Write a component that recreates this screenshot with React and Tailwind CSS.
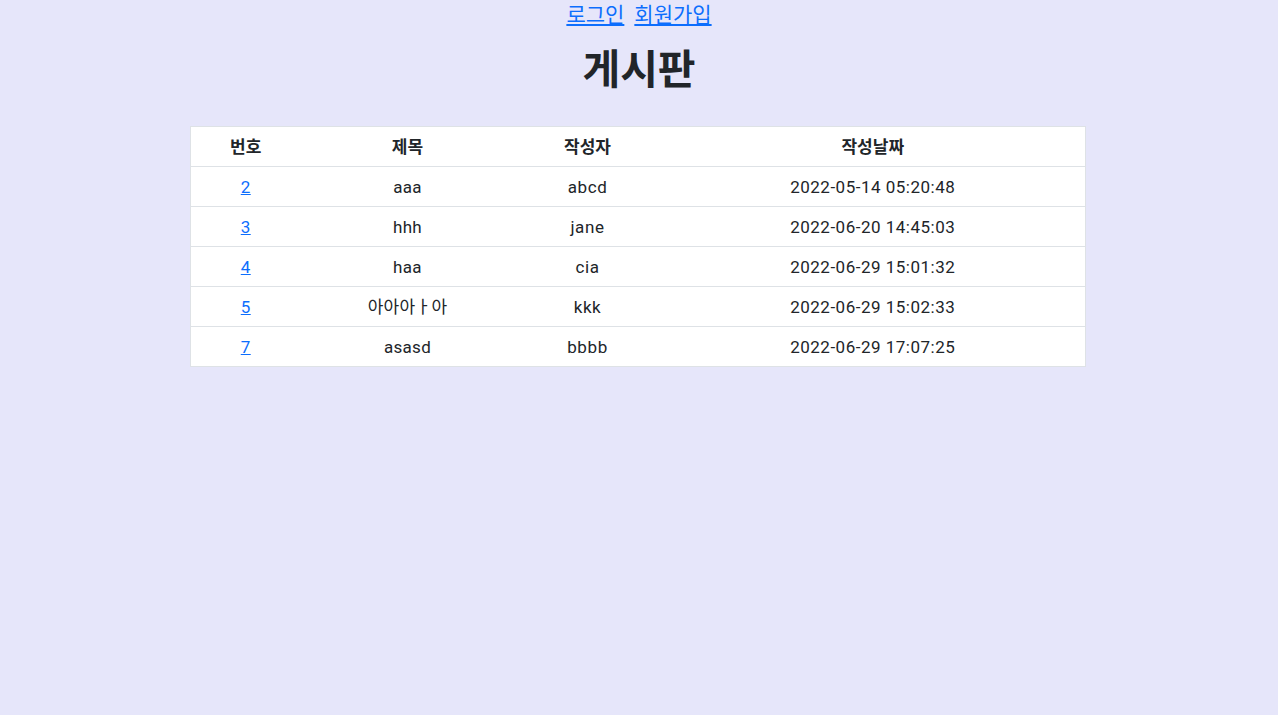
import React from 'react';

const posts = [
    { id: 2, title: 'aaa', writer: 'abcd', date: '2022-05-14 05:20:48' },
    { id: 3, title: 'hhh', writer: 'jane', date: '2022-06-20 14:45:03' },
    { id: 4, title: 'haa', writer: 'cia', date: '2022-06-29 15:01:32' },
    { id: 5, title: '아아아ㅏ아', writer: 'kkk', date: '2022-06-29 15:02:33' },
    { id: 7, title: 'asasd', writer: 'bbbb', date: '2022-06-29 17:07:25' },
];

export default function App() {
    return (
        <div className="min-h-[715px] bg-[#e6e6fa] text-[#212529] font-['Roboto','Noto_Sans_CJK_KR',sans-serif] text-[17px]">
            {/* 상단 링크 */}
            <div className="flex justify-center gap-[10px] text-[21px] leading-[30px]">
                <a href="#" className="text-[#0d6efd] underline">로그인</a>
                <a href="#" className="text-[#0d6efd] underline">회원가입</a>
            </div>

            <h1 className="text-center text-[41px] font-bold leading-[48px] mt-[16px] mb-[32px]">게시판</h1>

            <table className="ml-[190px] w-[896px] bg-white border border-[#dee2e6] border-collapse text-center">
                <thead>
                    <tr className="border-b border-[#dee2e6]">
                        <th className="w-[110px] py-[7.5px] leading-6 font-bold">번호</th>
                        <th className="w-[214px] py-[7.5px] leading-6 font-bold">제목</th>
                        <th className="w-[146px] py-[7.5px] leading-6 font-bold">작성자</th>
                        <th className="py-[7.5px] leading-6 font-bold">작성날짜</th>
                    </tr>
                </thead>
                <tbody>
                    {posts.map((p) => (
                        <tr key={p.id} className="border-b border-[#dee2e6]">
                            <td className="py-[7.5px] leading-6 tracking-[0.4px]">
                                <a href="#" className="text-[#0d6efd] underline">{p.id}</a>
                            </td>
                            <td className="py-[7.5px] leading-6 tracking-[0.3px]">{p.title}</td>
                            <td className="py-[7.5px] leading-6 tracking-[0.6px]">{p.writer}</td>
                            <td className="py-[7.5px] leading-6 tracking-[0.5px]">{p.date}</td>
                        </tr>
                    ))}
                </tbody>
            </table>
        </div>
    );
}
